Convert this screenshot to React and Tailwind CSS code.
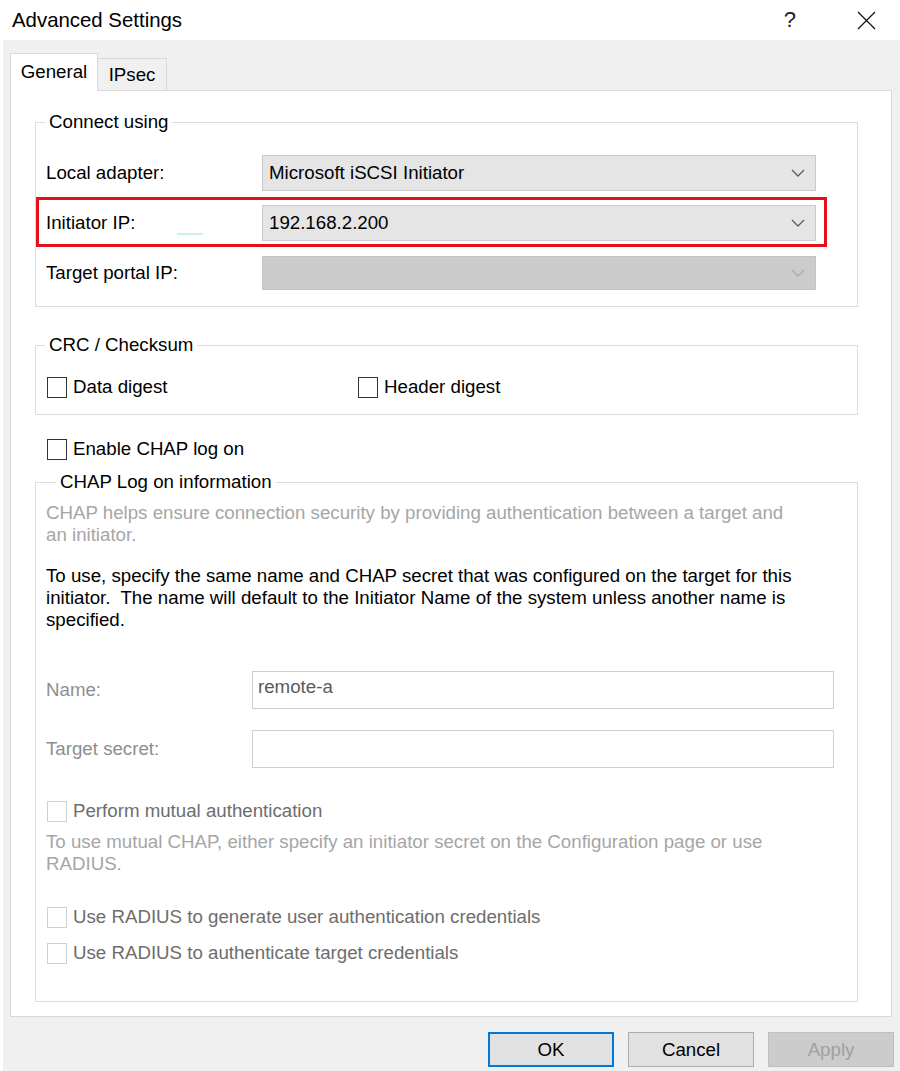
import React from 'react';

function Chevron({ color = '#606060' }) {
  return (
    <svg width="14" height="8" viewBox="0 0 14 8" fill="none">
      <path d="M1 1l6 6 6-6" stroke={color} strokeWidth="1.4" />
    </svg>
  );
}

function Dropdown({ value, disabled }) {
  return (
    <div
      className={`flex items-center justify-between w-[554px] pl-[6px] pr-[10px] border ${
        disabled ? 'h-[34px] bg-[#cccccc] border-[#c4c4c4]' : 'h-[36px] bg-[#e5e5e5] border-[#cacaca]'
      }`}
    >
      <span className="text-black">{value}</span>
      <Chevron color={disabled ? '#ababab' : '#5f5f5f'} />
    </div>
  );
}

function Check({ label, disabled, textColor }) {
  return (
    <div className="flex items-center h-[22px]">
      <span
        className={`w-[20px] h-[21px] bg-white border ${disabled ? 'border-[#d0d0d0]' : 'border-[#333333]'}`}
      />
      <span className={`ml-[6px] ${textColor || 'text-black'}`}>{label}</span>
    </div>
  );
}

function Group({ title, legendClass = 'ml-[9px]', className = '', children }) {
  return (
    <fieldset className={`w-[823px] border border-[#dcdcdc] px-0 ${className}`}>
      <legend className={`${legendClass} px-[4px] leading-[22px] text-black`}>{title}</legend>
      {children}
    </fieldset>
  );
}

export default function App() {
  return (
    <div className="w-[900px] h-[1071px] bg-white flex flex-col font-['Liberation_Sans',Arial,sans-serif] text-[18.7px] leading-[22px] text-black overflow-hidden">
      {/* title bar */}
      <div className="h-[40px] flex items-center pl-[12px] pr-[24px]">
        <span className="text-[20.4px]">Advanced Settings</span>
        <span className="ml-auto text-[22px] font-light text-[#222]">?</span>
        <svg className="ml-[61px]" width="19" height="19" viewBox="0 0 19 19" fill="none">
          <path d="M1 1l17 17M18 1L1 18" stroke="#111" strokeWidth="1.2" />
        </svg>
      </div>

      <div className="flex-1 ml-[3px] bg-[#f0f0f0] pl-[7px] pr-[6px] pt-[13px]">
        {/* tabs */}
        <div className="flex items-end h-[38px] -mb-[1px] relative z-10">
          <div className="w-[88px] h-[38px] bg-white border border-b-0 border-[#d9d9d9] flex items-center justify-center pb-[2px]">
            General
          </div>
          <div className="w-[69px] h-[32px] mb-[1px] bg-[#f0f0f0] border border-l-0 border-b-0 border-[#d9d9d9] flex items-center justify-center">
            IPsec
          </div>
        </div>

        {/* panel */}
        <div className="w-[882px] h-[927px] bg-white border border-[#d9d9d9] pl-[24px] pt-[20px]">
          <Group title="Connect using">
            <div className="pt-[22px] pb-[16px]">
              <div className="flex items-center pl-[10px]">
                <span className="w-[216px]">Local adapter:</span>
                <Dropdown value="Microsoft iSCSI Initiator" />
              </div>
              <div className="mt-[6px] w-[791px] h-[50px] border-[3px] border-[#e3111c] flex items-center pl-[7px] pt-[2px]">
                <span className="w-[216px] flex items-center">
                  Initiator IP:
                  <span className="ml-[42px] mt-[22px] w-[26px] h-[2px] bg-[#cdeef2]" />
                </span>
                <Dropdown value="192.168.2.200" />
              </div>
              <div className="flex items-center pl-[10px] mt-[9px]">
                <span className="w-[216px]">Target portal IP:</span>
                <Dropdown value="" disabled />
              </div>
            </div>
          </Group>

          <Group title="CRC / Checksum" className="mt-[27px]">
            <div className="pt-[20px] pb-[16px] pl-[11px] grid grid-cols-[311px_1fr]">
              <Check label="Data digest" />
              <Check label="Header digest" />
            </div>
          </Group>

          <div className="mt-[23px] pl-[12px]">
            <Check label="Enable CHAP log on" />
          </div>

          <Group title="CHAP Log on information" legendClass="ml-[20px]" className="mt-[11px]">
            <div className="pl-[10px] pt-[9px] pb-[37px]">
              <p className="text-[#a6a6a6]">
                CHAP helps ensure connection security by providing authentication between a target and
                <br />
                an initiator.
              </p>
              <p className="mt-[19px] text-black">
                To use, specify the same name and CHAP secret that was configured on the target for this
                <br />
                initiator.&nbsp; The name will default to the Initiator Name of the system unless another name is
                <br />
                specified.
              </p>

              <div className="mt-[40px] flex items-center">
                <span className="w-[206px] text-[#8e8e8e]">Name:</span>
                <div className="w-[582px] h-[38px] border border-[#cfcfcf] bg-white pl-[5px] pt-[4px] text-[#5a5a5a]">
                  remote-a
                </div>
              </div>
              <div className="mt-[21px] flex items-center">
                <span className="w-[206px] text-[#8e8e8e]">Target secret:</span>
                <div className="w-[582px] h-[38px] border border-[#cfcfcf] bg-white" />
              </div>

              <div className="mt-[32px] pl-[1px]">
                <Check label="Perform mutual authentication" disabled textColor="text-[#6d6d6d]" />
              </div>
              <p className="mt-[9px] text-[#a6a6a6]">
                To use mutual CHAP, either specify an initiator secret on the Configuration page or use
                <br />
                RADIUS.
              </p>
              <div className="mt-[31px] pl-[1px]">
                <Check label="Use RADIUS to generate user authentication credentials" disabled textColor="text-[#6d6d6d]" />
              </div>
              <div className="mt-[14px] pl-[1px]">
                <Check label="Use RADIUS to authenticate target credentials" disabled textColor="text-[#6d6d6d]" />
              </div>
            </div>
          </Group>
        </div>

        {/* buttons */}
        <div className="mt-[15px] flex justify-end gap-[14px]">
          <button className="w-[126px] h-[35px] bg-[#e1e1e1] border-2 border-[#0078d7] text-black">OK</button>
          <button className="w-[126px] h-[35px] bg-[#e1e1e1] border border-[#adadad] text-black">Cancel</button>
          <button className="w-[126px] h-[35px] bg-[#cccccc] border border-[#bfbfbf] text-[#a0a0a0]">Apply</button>
        </div>
      </div>
    </div>
  );
}
